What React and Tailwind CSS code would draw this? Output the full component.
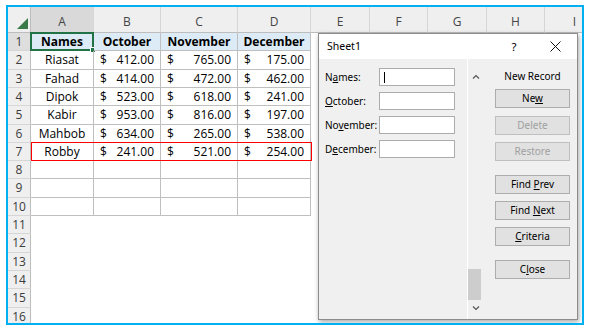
import React from 'react';

const data = [
  ['Riasat', '412.00', '765.00', '175.00'],
  ['Fahad', '414.00', '472.00', '462.00'],
  ['Dipok', '523.00', '618.00', '241.00'],
  ['Kabir', '953.00', '816.00', '197.00'],
  ['Mahbob', '634.00', '265.00', '538.00'],
  ['Robby', '241.00', '521.00', '254.00'],
];
const heights = [18, 19, 18, 18, 19, 18, 18, 18, 19, 18, 18, 19, 18, 18, 19, 18];
const dataCols = ['w-[63px]', 'w-[67px]', 'w-[77px]', 'w-[73px]'];
const headCols = [
  { l: 'A', w: 'w-[63px]' },
  { l: 'B', w: 'w-[67px]' },
  { l: 'C', w: 'w-[77px]' },
  { l: 'D', w: 'w-[73px]' },
  { l: 'E', w: 'w-[59px]' },
  { l: 'F', w: 'w-[58px]' },
  { l: 'G', w: 'w-[59px]' },
  { l: 'H', w: 'w-[58px]' },
  { l: 'I', w: 'w-[60px]' },
];

function Money({ v }) {
  return (
    <div className="flex w-full justify-between px-[6px]">
      <span>$</span>
      <span>{v}</span>
    </div>
  );
}

function DataCells({ r }) {
  if (r === 1) {
    const hs = ['Names', 'October', 'November', 'December'];
    return hs.map((t, i) => (
      <div
        key={i}
        className={`${dataCols[i]} shrink-0 relative border-r border-b border-[#bfbfbf] bg-[#ddebf7] flex items-center justify-center font-bold text-black`}
      >
        {t}
        {i === 0 && (
          <div className="absolute -left-px -top-px -right-px -bottom-px border-2 border-[#217346]">
            <div className="absolute -right-[4px] -bottom-[4px] w-[6px] h-[6px] bg-[#217346] border border-white" />
          </div>
        )}
      </div>
    ));
  }
  const row = data[r - 2];
  return dataCols.map((w, i) => (
    <div key={i} className={`${w} shrink-0 border-r border-b border-[#bfbfbf] flex items-center justify-center text-black`}>
      {row ? i === 0 ? row[0] : <Money v={row[i]} /> : null}
    </div>
  ));
}

function Row({ n, h }) {
  const hc = h === 19 ? 'h-[19px]' : 'h-[18px]';
  const hdr = n === 1 ? 'bg-[#dedede]' : 'bg-[#efefef]';
  return (
    <div className={`flex ${hc} shrink-0`}>
      <div className={`w-[23px] shrink-0 border-r border-[#bdbdbd] border-b border-b-[#d6d6d6] ${hdr} flex items-center justify-center text-[12px] text-[#3c3c3c]`}>
        {n}
      </div>
      {n <= 10 ? (
        <div className="flex relative">
          <DataCells r={n} />
          {n === 7 && <div className="absolute left-0 -top-px -right-px bottom-0 border border-[#ff0000]" />}
        </div>
      ) : null}
      <div className="flex-1 bg-white" />
    </div>
  );
}

function Btn({ children, disabled, mt }) {
  return (
    <div
      className={`${mt} w-[75px] h-[19px] shrink-0 border ${disabled ? 'border-[#bfbfbf] text-[#a0a0a0]' : 'border-[#adadad] text-black'} bg-[#e1e1e1] flex items-center justify-center`}
    >
      <span>{children}</span>
    </div>
  );
}

function Field({ label, caret }) {
  return (
    <div className="flex items-center h-[18px]">
      <span className="w-[54px] shrink-0">{label}</span>
      <div className="w-[76px] h-[18px] bg-white border border-[#acacac] flex items-center">
        {caret && <span className="ml-[4px] w-px h-[11px] bg-black" />}
      </div>
    </div>
  );
}

const U = ({ children }) => <span className="underline underline-offset-[1px] decoration-1">{children}</span>;

export default function App() {
  return (
    <div className="w-[590px] h-[334px] bg-white overflow-hidden font-['Open_Sans',sans-serif] text-[12px]">
      <div className="ml-[6px] mt-[5px] w-[578px] h-[320px] border-2 border-[#00b0f0] relative overflow-hidden bg-white">
        {/* column headers */}
        <div className="flex h-[26px]">
          <div className="w-[23px] shrink-0 bg-[#efefef] border-r border-b border-[#bdbdbd] relative">
            <svg className="absolute right-[2px] bottom-[3px]" width="11" height="11" viewBox="0 0 11 11">
              <polygon points="11,0 11,11 0,11" fill="#3a7a48" />
            </svg>
          </div>
          {headCols.map((c, i) => (
            <div
              key={c.l}
              className={`${c.w} shrink-0 border-r border-[#d6d6d6] border-b border-b-[#bdbdbd] ${i === 0 ? 'bg-[#d9d9d9]' : 'bg-[#efefef]'} flex items-center justify-center pt-[4px] text-[12px] text-[#444]`}
            >
              {c.l}
            </div>
          ))}
        </div>
        {heights.map((h, i) => (
          <Row key={i} n={i + 1} h={h} />
        ))}

        {/* Data form dialog */}
        <div className="absolute left-[310px] top-[26px] w-[260px] h-[287px] bg-[#f0f0f0] border border-[#8c8c8c] shadow-[1px_2px_5px_rgba(0,0,0,0.35)] flex flex-col font-['Noto_Sans',sans-serif] text-[10px] text-black">
          <div className="h-[25px] shrink-0 bg-white flex items-center">
            <span className="ml-[8px] text-[10.5px]">Sheet1</span>
            <span className="ml-auto w-[20px] text-center text-[11.5px]">?</span>
            <div className="ml-[21px] mr-[12px] w-[20px] flex justify-center">
              <svg width="11" height="11" viewBox="0 0 11 11">
                <path d="M0.5 0.5 L10.5 10.5 M10.5 0.5 L0.5 10.5" stroke="#111" strokeWidth="1" />
              </svg>
            </div>
          </div>
          <div className="flex flex-1">
            <div className="w-[148px] shrink-0 pl-[6px] pt-[9px] flex flex-col gap-[6px]">
              <Field label={<>N<U>a</U>mes:</>} caret />
              <Field label={<><U>O</U>ctober:</>} />
              <Field label={<>No<U>v</U>ember:</>} />
              <Field label={<>D<U>e</U>cember:</>} />
            </div>
            <div className="w-[16px] shrink-0 border-l border-white flex flex-col items-center">
              <svg className="mt-[15px]" width="8" height="5" viewBox="0 0 8 5">
                <polyline points="1,4.5 4,1.5 7,4.5" fill="none" stroke="#555" strokeWidth="1.2" />
              </svg>
              <div className="mt-auto self-start w-[13px] h-[31px] bg-[#cdcdcd]" />
              <svg className="mt-[6px] mb-[8px]" width="8" height="5" viewBox="0 0 8 5">
                <polyline points="1,0.5 4,3.5 7,0.5" fill="none" stroke="#555" strokeWidth="1.2" />
              </svg>
            </div>
            <div className="flex-1 pl-[12px] pt-[11px] flex flex-col">
              <div className="w-[75px] h-[12px] leading-[12px] text-center">New Record</div>
              <Btn mt="mt-[7px]">Ne<U>w</U></Btn>
              <Btn mt="mt-[8px]" disabled>Delete</Btn>
              <Btn mt="mt-[7px]" disabled>Restore</Btn>
              <Btn mt="mt-[14px]">Find <U>P</U>rev</Btn>
              <Btn mt="mt-[7px]">Find <U>N</U>ext</Btn>
              <Btn mt="mt-[7px]"><U>C</U>riteria</Btn>
              <Btn mt="mt-[14px]">C<U>l</U>ose</Btn>
            </div>
          </div>
        </div>
      </div>
    </div>
  );
}
